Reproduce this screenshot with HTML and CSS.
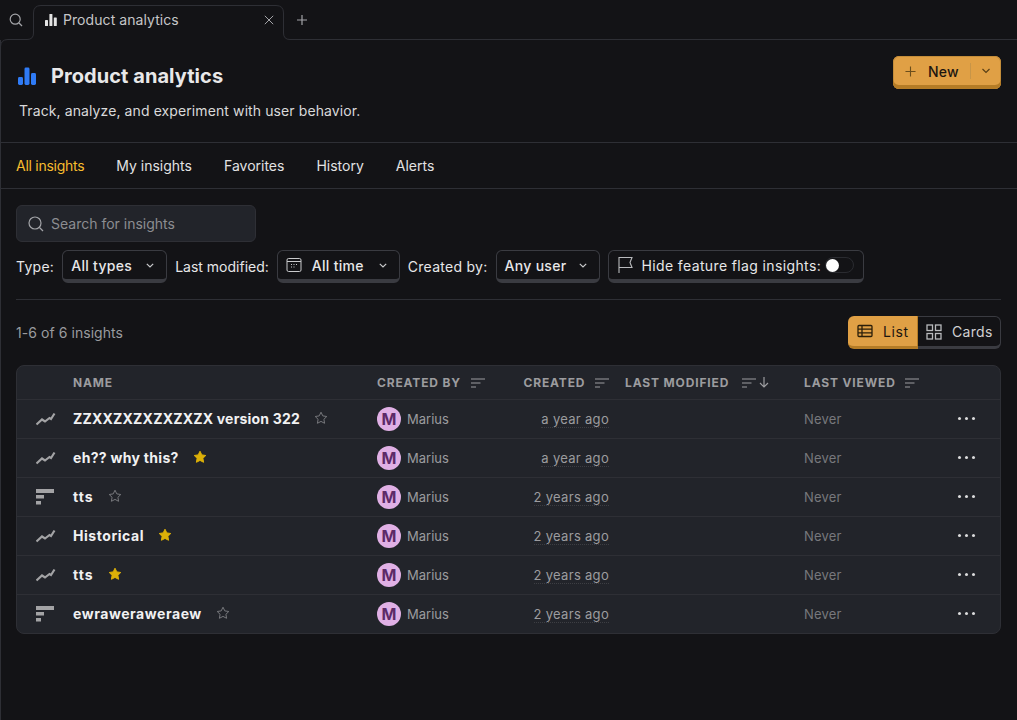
FILE: index.html
```html
<!DOCTYPE html>
<html lang="en">
<head>
    <meta charset="UTF-8">
    <title>Product analytics</title>
    <link rel="stylesheet" href="styles.css">
</head>
<body>
    <svg class="tab-outline" width="1017" height="48" viewBox="0 0 1017 48" fill="none">
        <path d="M.5 48V47Q.5 39.5 8 39.5H27Q33.5 39.5 33.5 33V13Q33.5 5.5 41 5.5H276Q283.5 5.5 283.5 13V33Q283.5 39.5 290 39.5H1017"/>
    </svg>
    <div class="tabbar">
        <div class="tab-search">
            <svg width="16" height="16" viewBox="0 0 16 16" fill="none" stroke="#a3a4a8" stroke-width="1.2"><circle cx="7.2" cy="7.2" r="5"/><path d="M11 11l3 3"/></svg>
        </div>
        <div class="tab">
            <svg width="14" height="14" viewBox="0 0 14 14" fill="#e4e4e4"><rect x="1" y="7" width="3" height="6" rx=".6"/><rect x="5.4" y="1" width="3" height="12" rx=".6"/><rect x="9.8" y="4.5" width="3" height="8.5" rx=".6"/></svg>
            <span class="tab-label">Product analytics</span>
            <svg class="tab-close" width="10" height="10" viewBox="0 0 10 10" stroke="#a3a4a8" stroke-width="1"><path d="M.8.8l8.4 8.4M9.2.8L.8 9.2"/></svg>
        </div>
        <div class="tab-add">
            <svg width="12" height="12" viewBox="0 0 12 12" stroke="#a3a4a8" stroke-width="1.2"><path d="M6 1v10M1 6h10"/></svg>
        </div>
    </div>

    <main class="panel">
        <header class="page-header">
            <div>
                <div class="title-row">
                    <svg width="20" height="20" viewBox="0 0 20 20" fill="#2f7bf6"><rect x="1" y="11" width="5" height="8" rx="1.4"/><rect x="7.500" y="1.500" width="5" height="17.500" rx="1.400"/><rect x="14" y="7" width="5" height="12" rx="1.400"/></svg>
                    <h1>Product analytics</h1>
                </div>
                <p class="caption">Track, analyze, and experiment with user behavior.</p>
            </div>
            <div class="new-btn">
                <svg width="11" height="11" viewBox="0 0 12 12" stroke="#6b4e1c" stroke-width="1.2"><path d="M6 .5v11M.5 6h11"/></svg>
                <span class="new-label">New</span>
                <span class="new-sep"></span>
                <svg width="10" height="6" viewBox="0 0 10 6" fill="none" stroke="#5a4017" stroke-width="1.2"><path d="M1.500 1l3.500 3.500L8.500 1"/></svg>
            </div>
        </header>

        <nav class="tabs">
            <a class="tabs-item active">All insights</a>
            <a class="tabs-item">My insights</a>
            <a class="tabs-item">Favorites</a>
            <a class="tabs-item">History</a>
            <a class="tabs-item">Alerts</a>
        </nav>

        <section class="content">
            <div class="search">
                <svg width="18" height="18" viewBox="0 0 18 18" fill="none" stroke="#a3a4a8" stroke-width="1.200"><circle cx="8" cy="8" r="6"/><path d="M12.500 12.500l3.500 3.500"/></svg>
                <span>Search for insights</span>
            </div>

            <div class="filters">
                <span class="filter-label">Type:</span>
                <div class="select select-type">All types <svg class="chev" width="8" height="5" viewBox="0 0 8 5" fill="none"><path d="M.8.8L4 4l3.200-3.200"/></svg></div>
                <span>Last modified:</span>
                <div class="select select-time">
                    <svg width="16" height="16" viewBox="0 0 16 16" fill="none" stroke="#c9cacc" stroke-width="1"><rect x="1" y="1.500" width="14" height="13" rx="1.500"/><path d="M1 4.500h14"/><path d="M5 7.500h1M7.500 7.500h1M10 7.500h1M5 10h1M7.500 10h1"/></svg>
                    <span class="select-text">All time</span>
                    <svg class="chev" width="8" height="5" viewBox="0 0 8 5" fill="none"><path d="M.8.8L4 4l3.200-3.200"/></svg>
                </div>
                <span class="filter-label">Created by:</span>
                <div class="select select-user">Any user <svg class="chev" width="8" height="5" viewBox="0 0 8 5" fill="none"><path d="M.8.8L4 4l3.200-3.200"/></svg></div>
                <div class="select select-flag">
                    <svg width="18" height="18" viewBox="0 0 18 18" fill="none" stroke="#b9babd" stroke-width="1.100"><path d="M2 17V1.500h13l-2 5 2 5H2"/></svg>
                    <span>Hide feature flag insights:</span>
                    <span class="switch"><span class="switch-knob"></span></span>
                </div>
            </div>

            <hr class="divider">

            <div class="results-bar">
                <span class="count">1-6 of 6 insights</span>
                <div class="view-toggle">
                    <div class="view-btn view-on">
                        <svg width="16" height="14" viewBox="0 0 16 14" fill="none" stroke="#2b1f0a" stroke-width="1.300"><rect x="1" y="1.500" width="14" height="11" rx="1"/><path d="M1 5.200h14M1 8.800h14M5 1.500v11"/></svg>
                        List
                    </div>
                    <div class="view-btn">
                        <svg width="16" height="16" viewBox="0 0 16 16" fill="none" stroke="#b9babd" stroke-width="1.300"><rect x="1" y="1" width="5.500" height="5.500"/><rect x="9.500" y="1" width="5.500" height="5.500"/><rect x="1" y="9.500" width="5.500" height="5.500"/><rect x="9.500" y="9.500" width="5.500" height="5.500"/></svg>
                        Cards
                    </div>
                </div>
            </div>

            <div class="table-wrap">
                <table class="insights">
                    <colgroup>
                        <col class="col-icon"><col class="col-name"><col class="col-author"><col class="col-created"><col class="col-modified"><col class="col-viewed"><col>
                    </colgroup>
                    <thead>
                        <tr>
                            <th></th>
                            <th>NAME</th>
                            <th>CREATED BY <svg class="sort" width="14" height="10" viewBox="0 0 14 10"><path d="M0 1h14M0 5h9.500M0 9h5"/></svg></th>
                            <th class="right">CREATED <svg class="sort" width="14" height="10" viewBox="0 0 14 10"><path d="M0 1h14M0 5h9.500M0 9h5"/></svg></th>
                            <th>LAST MODIFIED <svg class="sort sort-mod" width="14" height="10" viewBox="0 0 14 10"><path d="M0 1h14M0 5h9.500M0 9h5"/></svg><svg class="sort-arrow" width="10" height="11" viewBox="0 0 10 11" fill="none"><path d="M5 0v10M1 6l4 4 4-4"/></svg></th>
                            <th>LAST VIEWED <svg class="sort" width="14" height="10" viewBox="0 0 14 10"><path d="M0 1h14M0 5h9.500M0 9h5"/></svg></th>
                            <th></th>
                        </tr>
                    </thead>
                    <tbody>
                        <tr>
                            <td class="type-cell"><svg class="ico-trend" width="20" height="14" viewBox="0 0 20 14" fill="none"><path d="M.5 12.500L6 7.500l3 2L13.500 6l1.500 1L18.500 1.500"/></svg></td>
                            <td class="name name-caps">ZZXXZXZXZXZXZX version 322<svg class="star" width="14" height="14" viewBox="0 0 14 14"><path d="M7 1.200l1.800 3.700 4 .6-2.900 2.800.7 4L7 10.400l-3.600 1.900.7-4L1.200 5.500l4-.6z"/></svg></td>
                            <td><div class="author"><span class="avatar">M</span>Marius</div></td>
                            <td class="right"><span class="when">a year ago</span></td>
                            <td></td>
                            <td class="never">Never</td>
                            <td class="more"><span class="dots"><i></i><i></i><i></i></span></td>
                        </tr>
                        <tr>
                            <td class="type-cell"><svg class="ico-trend" width="20" height="14" viewBox="0 0 20 14" fill="none"><path d="M.5 12.500L6 7.500l3 2L13.500 6l1.500 1L18.500 1.500"/></svg></td>
                            <td class="name name-why">eh?? why this?<svg class="star star-on" width="14" height="14" viewBox="0 0 14 14"><path d="M7 1.200l1.800 3.700 4 .6-2.900 2.800.7 4L7 10.400l-3.600 1.900.7-4L1.200 5.500l4-.6z"/></svg></td>
                            <td><div class="author"><span class="avatar">M</span>Marius</div></td>
                            <td class="right"><span class="when">a year ago</span></td>
                            <td></td>
                            <td class="never">Never</td>
                            <td class="more"><span class="dots"><i></i><i></i><i></i></span></td>
                        </tr>
                        <tr>
                            <td class="type-cell"><svg width="18" height="16" viewBox="0 0 18 16" fill="#a3a3a5"><rect width="18" height="4"/><rect y="6" width="8" height="3.500"/><rect y="12" width="5" height="3.500"/></svg></td>
                            <td class="name name-tts">tts<svg class="star" width="14" height="14" viewBox="0 0 14 14"><path d="M7 1.200l1.800 3.700 4 .6-2.900 2.800.7 4L7 10.400l-3.600 1.900.7-4L1.200 5.500l4-.6z"/></svg></td>
                            <td><div class="author"><span class="avatar">M</span>Marius</div></td>
                            <td class="right"><span class="when">2 years ago</span></td>
                            <td></td>
                            <td class="never">Never</td>
                            <td class="more"><span class="dots"><i></i><i></i><i></i></span></td>
                        </tr>
                        <tr>
                            <td class="type-cell"><svg class="ico-trend" width="20" height="14" viewBox="0 0 20 14" fill="none"><path d="M.5 12.500L6 7.500l3 2L13.500 6l1.500 1L18.500 1.500"/></svg></td>
                            <td class="name">Historical<svg class="star star-on" width="14" height="14" viewBox="0 0 14 14"><path d="M7 1.200l1.800 3.700 4 .6-2.900 2.800.7 4L7 10.400l-3.600 1.900.7-4L1.200 5.500l4-.6z"/></svg></td>
                            <td><div class="author"><span class="avatar">M</span>Marius</div></td>
                            <td class="right"><span class="when">2 years ago</span></td>
                            <td></td>
                            <td class="never">Never</td>
                            <td class="more"><span class="dots"><i></i><i></i><i></i></span></td>
                        </tr>
                        <tr>
                            <td class="type-cell"><svg class="ico-trend" width="20" height="14" viewBox="0 0 20 14" fill="none"><path d="M.5 12.500L6 7.500l3 2L13.500 6l1.500 1L18.500 1.500"/></svg></td>
                            <td class="name name-tts">tts<svg class="star star-on" width="14" height="14" viewBox="0 0 14 14"><path d="M7 1.200l1.800 3.700 4 .6-2.900 2.800.7 4L7 10.400l-3.600 1.900.7-4L1.200 5.500l4-.6z"/></svg></td>
                            <td><div class="author"><span class="avatar">M</span>Marius</div></td>
                            <td class="right"><span class="when">2 years ago</span></td>
                            <td></td>
                            <td class="never">Never</td>
                            <td class="more"><span class="dots"><i></i><i></i><i></i></span></td>
                        </tr>
                        <tr>
                            <td class="type-cell"><svg width="18" height="16" viewBox="0 0 18 16" fill="#a3a3a5"><rect width="18" height="4"/><rect y="6" width="8" height="3.500"/><rect y="12" width="5" height="3.500"/></svg></td>
                            <td class="name">ewraweraweraew<svg class="star" width="14" height="14" viewBox="0 0 14 14"><path d="M7 1.200l1.800 3.700 4 .6-2.900 2.800.7 4L7 10.400l-3.600 1.900.7-4L1.200 5.500l4-.6z"/></svg></td>
                            <td><div class="author"><span class="avatar">M</span>Marius</div></td>
                            <td class="right"><span class="when">2 years ago</span></td>
                            <td></td>
                            <td class="never">Never</td>
                            <td class="more"><span class="dots"><i></i><i></i><i></i></span></td>
                        </tr>
                    </tbody>
                </table>
            </div>
        </section>
    </main>
</body>
</html>
```

FILE: styles.css
```css
* {
    box-sizing: border-box;
}

html, body {
    height: 100%;
}

body {
    margin: 0;
    background-color: #131316;
    color: #e7e7e8;
    font-family: Inter, "Liberation Sans", sans-serif;
    font-size: 14px;
    overflow: hidden;
    position: relative;
}

svg {
    display: block;
    flex: none;
}

.tab-outline {
    position: absolute;
    top: 0;
    left: 0;
}

.tab-outline path {
    stroke: #2e2f35;
}

.tabbar {
    height: 40px;
    display: flex;
    align-items: center;
}

.tab-search {
    width: 34px;
    display: flex;
    justify-content: center;
    padding-right: 2px;
}

.tab {
    width: 250px;
    display: flex;
    align-items: center;
    gap: 5px;
    padding: 0 10px;
}

.tab-label {
    flex: 1;
    margin-top: -2px;
    color: #c6c6c8;
    letter-spacing: .07px;
}

.tab-add {
    margin-left: 12px;
}

.panel {
    height: 680px;
    border-left: 1px solid #2e2f35;
}

.page-header {
    height: 103px;
    display: flex;
    justify-content: space-between;
    padding: 16px 16px 0 15px;
    border-bottom: 1px solid #2e2f35;
}

.title-row {
    display: flex;
    align-items: center;
    gap: 14px;
    height: 40px;
}

.title-row svg {
    margin-left: 1px;
}

h1 {
    margin: 0;
    font-size: 20px;
    font-weight: 700;
    letter-spacing: .06px;
    color: #e8e8e9;
}

.caption {
    margin: 5px 0 0 3px;
    line-height: 20px;
    letter-spacing: .1px;
    color: #d9d9da;
}

.new-btn {
    width: 108px;
    height: 33px;
    display: flex;
    align-items: center;
    padding: 0 10px 3px 12px;
    background-color: #e0a045;
    border-radius: 6px;
    box-shadow: inset 0 -4px 0 #b57c26, inset 0 0 0 1px #c48d3a;
    color: #1c1610;
}

.new-label {
    margin-left: 12px;
    font-weight: 500;
    letter-spacing: .2px;
}

.new-sep {
    width: 1px;
    height: 16px;
    margin: 0 10px 0 auto;
    background-color: #c79548;
}

.tabs {
    height: 46px;
    display: flex;
    align-items: center;
    gap: 32px;
    padding-left: 15px;
    border-bottom: 1px solid #2e2f35;
}

.tabs-item {
    color: #e2e2e3;
}

.tabs-item.active {
    color: #f7bc2e;
    letter-spacing: -.27px;
}

.content {
    padding: 16px 16px 0 15px;
}

.search {
    width: 240px;
    height: 37px;
    display: flex;
    align-items: center;
    gap: 6px;
    padding-left: 10px;
    background-color: #22242a;
    border: 1px solid #2e2f35;
    border-radius: 6px;
    color: #8c8d91;
}

.filters {
    display: flex;
    align-items: center;
    gap: 8px;
    margin-top: 8px;
    height: 33px;
}

.filter-label {
    letter-spacing: .27px;
}

.select {
    height: 33px;
    display: flex;
    align-items: center;
    padding: 0 8px;
    border: 1px solid #3a3b41;
    border-bottom-width: 4px;
    border-radius: 6px;
    font-weight: 500;
    letter-spacing: .3px;
    color: #e7e7e8;
}

.chev {
    margin-left: auto;
    margin-right: 4px;
}

.chev path {
    stroke: #c9cacc;
    stroke-width: 1.200;
}

.select-type {
    width: 105px;
}

.select-time {
    width: 123px;
}

.select-text {
    margin-left: 10px;
}

.select-user {
    width: 104px;
}

.select-flag {
    width: 256px;
    gap: 7px;
    font-weight: 400;
    letter-spacing: .37px;
}

.switch {
    width: 29px;
    height: 16px;
    margin-left: -3px;
    display: flex;
    align-items: center;
    border: 1px solid #2a2b30;
    border-radius: 8px;
}

.switch-knob {
    width: 13px;
    height: 13px;
    border-radius: 50%;
    background-color: #fff;
}

.divider {
    margin: 16px 0 0 0;
    border: 0;
    border-top: 1px solid #2e2f35;
}

.results-bar {
    display: flex;
    justify-content: space-between;
    align-items: flex-start;
    margin-top: 16px;
    height: 49px;
}

.count {
    margin-top: 8px;
    letter-spacing: .06px;
    color: #9a9b9f;
}

.view-toggle {
    display: flex;
}

.view-btn {
    height: 33px;
    width: 83px;
    display: flex;
    align-items: center;
    gap: 10px;
    padding-left: 8px;
    border: 1px solid #3a3b41;
    border-left: 0;
    border-bottom-width: 3px;
    border-radius: 0 6px 6px 0;
    letter-spacing: .3px;
    color: #d0d0d2;
}

.view-on {
    width: 70px;
    background-color: #e0a045;
    border: 0;
    border-bottom: 3px solid #b57c26;
    border-right: 1px solid #b57c26;
    border-radius: 6px 0 0 6px;
    color: #1c1610;
    padding-left: 9px;
    letter-spacing: .6px;
}

.table-wrap {
    background-color: #22242a;
    border: 1px solid #2e2f35;
    border-radius: 8px;
    overflow: hidden;
}

.insights {
    width: 100%;
    border-collapse: collapse;
    table-layout: fixed;
}

.col-icon {
    width: 48px;
}

.col-name {
    width: 304px;
}

.col-author {
    width: 146px;
}

.col-created {
    width: 102px;
}

.col-modified {
    width: 179px;
}

.col-viewed {
    width: 149px;
}

th {
    height: 33px;
    padding: 0 8px;
    text-align: left;
    white-space: nowrap;
    font-size: 12px;
    font-weight: 700;
    letter-spacing: .85px;
    color: #9c9c9f;
}

th svg {
    display: inline-block;
    vertical-align: -1px;
}

.sort {
    margin-left: 6px;
}

.sort-mod {
    margin-left: 9px;
}

.sort path {
    stroke: #9c9c9f;
    stroke-width: 1.200;
}

.sort-arrow {
    margin-left: 3px;
}

.sort-arrow path {
    stroke: #9c9c9f;
    stroke-width: 1.200;
}

td {
    height: 39px;
    padding: 0 8px;
    border-top: 1px solid #2e2f35;
    font-size: 13px;
    color: #9c9c9f;
}

.right {
    text-align: right;
}

.type-cell {
    padding-left: 19px;
}

.ico-trend path {
    stroke: #a3a3a5;
    stroke-width: 2.200;
}

td.name {
    font-size: 14px;
    font-weight: 700;
    letter-spacing: .55px;
    color: #f1f1f2;
    white-space: nowrap;
}

td.name-caps {
    letter-spacing: .2px;
}

td.name-why {
    letter-spacing: .3px;
}

td.name-tts {
    letter-spacing: 1px;
}

.star {
    display: inline-block;
    margin-left: 14px;
    vertical-align: -1px;
    fill: none;
    stroke: #77787c;
}

.star-on {
    fill: #dcb008;
    stroke: #dcb008;
}

.author {
    display: flex;
    align-items: center;
    gap: 6px;
}

.avatar {
    width: 24px;
    height: 24px;
    display: flex;
    align-items: center;
    justify-content: center;
    border-radius: 50%;
    background-color: #e0b0e5;
    color: #5d2a68;
    font-size: 16px;
    font-weight: 700;
}

.when {
    letter-spacing: .3px;
    border-bottom: 1px dotted #3d3e43;
}

.never {
    color: #77787c;
    letter-spacing: .2px;
}

.more {
    padding-left: 13px;
}

.dots {
    display: flex;
    gap: 4px;
}

.dots i {
    width: 3px;
    height: 3px;
    border-radius: 50%;
    background-color: #dcdcdd;
}
```
